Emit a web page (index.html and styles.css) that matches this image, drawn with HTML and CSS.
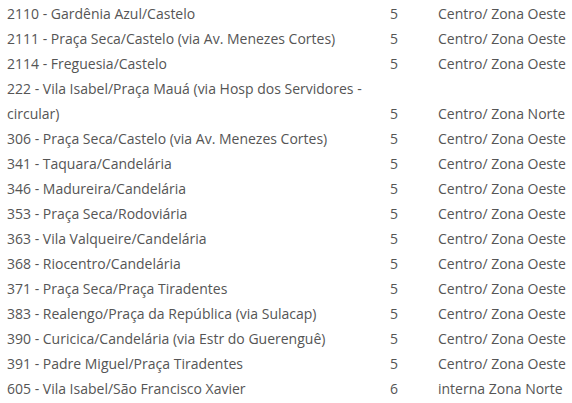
FILE: index.html
```html
<!DOCTYPE html>
<html lang="pt">
<head>
<meta charset="utf-8">
<link rel="stylesheet" href="styles.css">
</head>
<body>
<table class="lines">
<colgroup><col class="c-name"><col class="c-fare"><col class="c-zone"></colgroup>
<tbody>
<tr><td>2110 - Gardênia Azul/Castelo</td><td>5</td><td>Centro/ Zona Oeste</td></tr>
<tr><td>2111 - Praça Seca/Castelo (via Av. Menezes Cortes)</td><td>5</td><td>Centro/ Zona Oeste</td></tr>
<tr><td>2114 - Freguesia/Castelo</td><td>5</td><td>Centro/ Zona Oeste</td></tr>
<tr><td>222 - Vila Isabel/Praça Mauá (via Hosp dos Servidores - circular)</td><td>5</td><td>Centro/ Zona Norte</td></tr>
<tr><td>306 - Praça Seca/Castelo (via Av. Menezes Cortes)</td><td>5</td><td>Centro/ Zona Oeste</td></tr>
<tr><td>341 - Taquara/Candelária</td><td>5</td><td>Centro/ Zona Oeste</td></tr>
<tr><td>346 - Madureira/Candelária</td><td>5</td><td>Centro/ Zona Oeste</td></tr>
<tr><td>353 - Praça Seca/Rodoviária</td><td>5</td><td>Centro/ Zona Oeste</td></tr>
<tr><td>363 - Vila Valqueire/Candelária</td><td>5</td><td>Centro/ Zona Oeste</td></tr>
<tr><td>368 - Riocentro/Candelária</td><td>5</td><td>Centro/ Zona Oeste</td></tr>
<tr><td>371 - Praça Seca/Praça Tiradentes</td><td>5</td><td>Centro/ Zona Oeste</td></tr>
<tr><td>383 - Realengo/Praça da República (via Sulacap)</td><td>5</td><td>Centro/ Zona Oeste</td></tr>
<tr><td>390 - Curicica/Candelária (via Estr do Guerenguê)</td><td>5</td><td>Centro/ Zona Oeste</td></tr>
<tr><td>391 - Padre Miguel/Praça Tiradentes</td><td>5</td><td>Centro/ Zona Oeste</td></tr>
<tr><td>605 - Vila Isabel/São Francisco Xavier</td><td>6</td><td>interna Zona Norte</td></tr>
</tbody>
</table>
</body>
</html>
```

FILE: styles.css
```css
html, body {
  margin: 0;
  background: #fff;
}
body {
  padding-top: 1px;
  font-family: "Open Sans", "Liberation Sans", sans-serif;
  font-size: 14px;
  color: #555;
}
.lines {
  border-collapse: collapse;
  table-layout: fixed;
  width: 572px;
}
.c-name { width: 383px; }
.c-fare { width: 48px; }
.c-zone { width: 141px; }
.lines td {
  padding: 0 0 0 7px;
  line-height: 25px;
  vertical-align: bottom;
  text-align: left;
  white-space: normal;
}
.lines td:first-child {
  padding-right: 10px;
}
.lines td:last-child {
  white-space: nowrap;
}
```
